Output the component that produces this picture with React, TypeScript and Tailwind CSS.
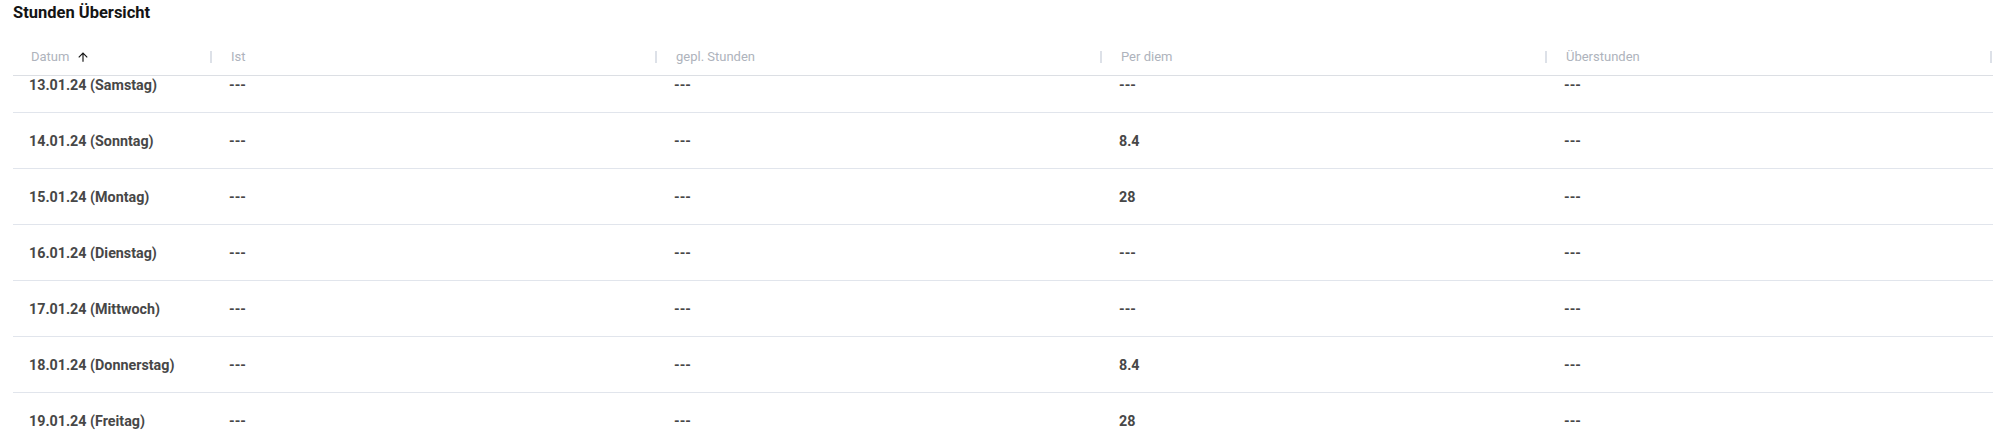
const rows = [
  { date: "13.01.24 (Samstag)", ist: "---", geplant: "---", perDiem: "---", ueber: "---" },
  { date: "14.01.24 (Sonntag)", ist: "---", geplant: "---", perDiem: "8.4", ueber: "---" },
  { date: "15.01.24 (Montag)", ist: "---", geplant: "---", perDiem: "28", ueber: "---" },
  { date: "16.01.24 (Dienstag)", ist: "---", geplant: "---", perDiem: "---", ueber: "---" },
  { date: "17.01.24 (Mittwoch)", ist: "---", geplant: "---", perDiem: "---", ueber: "---" },
  { date: "18.01.24 (Donnerstag)", ist: "---", geplant: "---", perDiem: "8.4", ueber: "---" },
  { date: "19.01.24 (Freitag)", ist: "---", geplant: "---", perDiem: "28", ueber: "---" },
];

function SortArrow() {
  return (
    <svg width="14" height="14" viewBox="0 0 24 24" className="ml-[7px] text-[#161616]">
      <path fill="currentColor" d="M4 12l1.41 1.41L11 7.83V20h2V7.83l5.58 5.59L20 12l-8-8-8 8z" />
    </svg>
  );
}

function HeaderCell({ label, first, sorted }: { label: string; first?: boolean; sorted?: boolean }) {
  return (
    <div
      className={[
        "flex items-center justify-between h-full pl-[18px]",
        first ? "w-[200px] shrink-0" : "flex-1 min-w-0",
      ].join(" ")}
    >
      <div className="flex items-center">
        <span className="text-[13px] text-[#aeb3bc]">{label}</span>
        {sorted && <SortArrow />}
      </div>
      <div className="w-[2px] h-[12px] bg-[#dde1e8] mr-[1px]" />
    </div>
  );
}

function Cell({ value, first }: { value: string; first?: boolean }) {
  return (
    <div
      className={[
        "pl-[16px] text-[14.3px] font-bold text-[#474747]",
        first ? "w-[200px] shrink-0" : "flex-1 min-w-0",
      ].join(" ")}
    >
      {value}
    </div>
  );
}

export default function App() {
  return (
    <div className="w-[2016px] h-[442px] overflow-hidden bg-white font-['Roboto',sans-serif]">
      <div className="pl-[13px] pt-[2px] h-[39px]">
        <h2 className="text-[16.5px] leading-[22px] font-bold text-[#141414]">Stunden Übersicht</h2>
      </div>
      <div className="ml-[13px] w-[1980px]">
        <div className="flex h-[37px] border-b border-[#dcdfe4]">
          <HeaderCell label="Datum" first sorted />
          <HeaderCell label="Ist" />
          <HeaderCell label="gepl. Stunden" />
          <HeaderCell label="Per diem" />
          <HeaderCell label="Überstunden" />
        </div>
        <div className="h-[366px] overflow-hidden">
          <div className="-mt-[19px]">
            {rows.map((r) => (
              <div key={r.date} className="flex items-center h-[56px] pt-[2px] border-b border-[#e1e5ec]">
                <Cell value={r.date} first />
                <Cell value={r.ist} />
                <Cell value={r.geplant} />
                <Cell value={r.perDiem} />
                <Cell value={r.ueber} />
              </div>
            ))}
          </div>
        </div>
      </div>
    </div>
  );
}
